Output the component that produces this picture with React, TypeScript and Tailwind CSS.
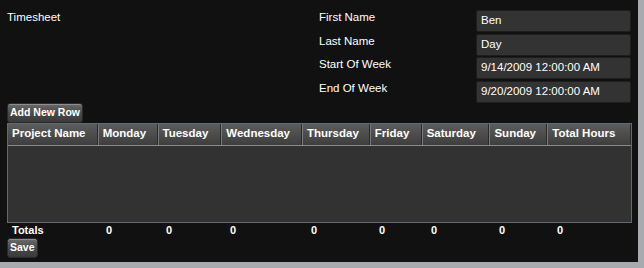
import React from "react"

const columns = [
  { name: "Project Name", width: 91 },
  { name: "Monday", width: 60 },
  { name: "Tuesday", width: 64 },
  { name: "Wednesday", width: 81 },
  { name: "Thursday", width: 68 },
  { name: "Friday", width: 52 },
  { name: "Saturday", width: 68 },
  { name: "Sunday", width: 58 },
  { name: "Total Hours", width: 83 },
]

const fields = [
  { label: "First Name", value: "Ben" },
  { label: "Last Name", value: "Day" },
  { label: "Start Of Week", value: "9/14/2009 12:00:00 AM" },
  { label: "End Of Week", value: "9/20/2009 12:00:00 AM" },
]

function GrayButton({ children }: { children: React.ReactNode }) {
  return (
    <button className="h-[20px] px-[2px] rounded-[3px] border border-[#2a2a2a] bg-gradient-to-b from-[#6a6a6a] via-[#4a4a4a] to-[#3a3a3a] text-white text-[10.5px] font-bold leading-none shadow-[inset_0_1px_0_rgba(255,255,255,0.25)]">
      {children}
    </button>
  )
}

export default function App() {
  return (
    <div
      className="w-[644px] h-[268px] bg-[#a7abaf] overflow-hidden"
      style={{ fontFamily: '"Liberation Sans", Arial, sans-serif' }}
    >
      <div className="w-[638px] h-[262px] bg-[#111111] text-white flex flex-col">
        <div className="flex">
          <div className="flex-1 pl-[7px] pt-[10px] text-[11.5px] leading-[14px]">Timesheet</div>
          <div className="grid grid-cols-[157px_155px] gap-y-[1.5px] pt-[10px] pr-[7px]">
            {fields.map((f) => (
              <React.Fragment key={f.label}>
                <div className="text-[11.5px] leading-[14px]">{f.label}</div>
                <div className="h-[22px] flex items-center pl-[4px] bg-[#333333] border border-[#1e1e1e] rounded-[2px] text-[11.5px] leading-none">
                  {f.value}
                </div>
              </React.Fragment>
            ))}
          </div>
        </div>

        <div className="flex pl-[7px]">
          <GrayButton>Add New Row</GrayButton>
        </div>

        <div className="ml-[7px] w-[625px] h-[100px] border border-[#5f6a72] bg-[#323232] flex flex-col">
          <div className="flex h-[22px] border-b border-[#8a8a8a] bg-gradient-to-b from-[#5c5c5c] to-[#3e3e3e]">
            {columns.map((c) => (
              <div
                key={c.name}
                className="flex items-center pl-[4px] border-r border-[#7a7a7a] text-[11.5px] font-bold leading-none shadow-[inset_-1px_0_0_#2a2a2a] last:border-r-0"
                style={{ width: c.width }}
              >
                {c.name}
              </div>
            ))}
          </div>
          <div className="flex-1" />
        </div>

        <div className="flex ml-[7px] h-[15px] items-center text-[11px] font-bold leading-none">
          {columns.map((c, i) => (
            <div key={c.name} className={i === 0 ? "pl-[5px]" : "pl-[8px]"} style={{ width: c.width }}>
              {i === 0 ? "Totals" : "0"}
            </div>
          ))}
        </div>

        <div className="flex pl-[7px]">
          <GrayButton>Save</GrayButton>
        </div>
      </div>
    </div>
  )
}
